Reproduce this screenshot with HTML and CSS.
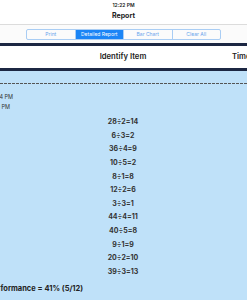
FILE: index.html
```html
<!DOCTYPE html>
<html lang="en">

<head>
    <meta charset="UTF-8">
    <meta name="viewport" content="width=device-width, initial-scale=1.0">
    <title>Report</title>
    <link rel="stylesheet" href="styles.css">
</head>

<body>
    <div class="status-bar">12:22 PM</div>
    <div class="nav-bar">Report</div>

    <div class="toolbar">
        <div class="segments">
            <div class="segment">Print</div>
            <div class="segment selected">Detailed Report</div>
            <div class="segment">Bar Chart</div>
            <div class="segment">Clear All</div>
        </div>
    </div>

    <div class="viewport">
        <div class="sheet">
            <div class="sheet-head">
                <div class="cell"></div>
                <div class="cell center">Identify Item</div>
                <div class="cell">Time</div>
            </div>

            <div class="sheet-body">
                <div class="dashes"></div>
                <div class="info">
                    <p>12:14 PM</p>
                    <p class="end-time">12:20 PM</p>
                </div>
                <ul class="answers">
                    <li>28÷2=14</li>
                    <li>6÷3=2</li>
                    <li>36÷4=9</li>
                    <li>10÷5=2</li>
                    <li>8÷1=8</li>
                    <li>12÷2=6</li>
                    <li>3÷3=1</li>
                    <li>44÷4=11</li>
                    <li>40÷5=8</li>
                    <li>9÷1=9</li>
                    <li>20÷2=10</li>
                    <li>39÷3=13</li>
                </ul>
                <p class="score">Performance = 41% (5/12)</p>
            </div>
        </div>
    </div>
</body>

</html>
```

FILE: styles.css
```css
body {
    margin: 0;
    font-family: Inter, 'Liberation Sans', sans-serif;
    color: #222;
    background-color: #bfe1f9;
    overflow: hidden;
}

p {
    margin: 0;
}

.status-bar {
    height: 10px;
    line-height: 10px;
    text-align: center;
    font-size: 5px;
    font-weight: 600;
    background-color: #fff;
}

.nav-bar {
    height: 14px;
    line-height: 12px;
    text-align: center;
    font-size: 7px;
    font-weight: 700;
    background-color: #fff;
    border-bottom: 1px solid #dcdcdc;
}

.toolbar {
    background-color: #fbfbfb;
    padding: 4px 0 3px 0;
}

.segments {
    display: flex;
    width: 195px;
    height: 11px;
    margin: auto;
    border: 1px solid #a9cdf4;
    border-radius: 2px;
    box-sizing: border-box;
}

.segment {
    flex: 1;
    text-align: center;
    font-size: 5px;
    line-height: 9px;
    color: #6aa4ec;
    border-left: 1px solid #a9cdf4;
}

.segment:first-child {
    border-left: none;
}

.segment.selected {
    background-color: #1b85f6;
    color: #fff;
}

.viewport {
    width: 247px;
    overflow: hidden;
}

.sheet {
    width: 420px;
    margin-left: -60px;
}

.sheet-head {
    display: grid;
    grid-template-columns: 80px 206px 134px;
    height: 22px;
    line-height: 22px;
    background-color: #fff;
    border-top: 3px solid #1c2743;
    border-bottom: 3px solid #1c2743;
    font-size: 7.7px;
    font-weight: 600;
}

.sheet-head .cell {
    padding-left: 6px;
}

.sheet-head .center {
    padding-left: 0;
    text-align: center;
}

.sheet-body {
    padding-top: 12px;
}

.dashes {
    height: 1px;
    background: repeating-linear-gradient(to right, #555 0 3px, transparent 3px 4px);
}

.info {
    margin-top: 8px;
    padding-left: 50px;
    font-size: 5.5px;
    line-height: 10px;
    color: #333;
}

.info .end-time {
    margin-left: -4px;
}

.answers {
    list-style: none;
    margin: 3px 0 0 0;
    padding: 0;
    width: 366px;
    text-align: center;
    font-size: 7px;
    font-weight: 700;
    line-height: 13.64px;
    color: #333;
}

.score {
    margin-top: 5px;
    padding-left: 48px;
    font-size: 7.5px;
    line-height: 10px;
    font-weight: 700;
}
```
